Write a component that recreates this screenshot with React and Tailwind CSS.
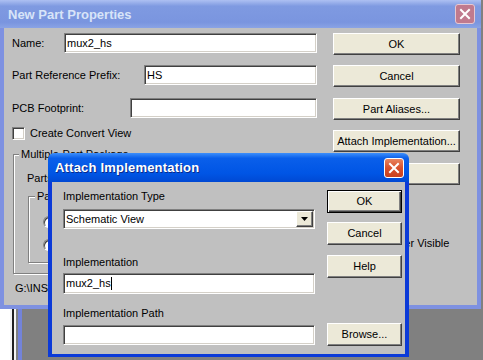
import React from "react";

const font = "font-['Liberation_Sans',Arial,sans-serif]";

const raised =
  "bg-[#ece9d8] border border-t-white border-l-white border-r-[#404040] border-b-[#404040] shadow-[inset_-1px_-1px_0_#808080]";
const sunken =
  "bg-white border border-t-[#808080] border-l-[#808080] border-r-white border-b-white shadow-[inset_1px_1px_0_#404040,inset_-1px_-1px_0_#d4d0c8]";
const etched = "border border-[#808080] shadow-[1px_1px_0_#fff,inset_1px_1px_0_#fff]";

const Button = ({ children, className = "", isDefault = false }) => (
  <div
    className={
      isDefault
        ? `flex items-center justify-center bg-[#ece9d8] border border-black shadow-[inset_1px_1px_0_#fff,inset_-1px_-1px_0_#404040,inset_-2px_-2px_0_#808080] ${className}`
        : `flex items-center justify-center ${raised} ${className}`
    }
  >
    <span className="text-[11px] leading-[13px] text-black">{children}</span>
  </div>
);

const Field = ({ value, caret = false, className = "" }) => (
  <div className={`flex items-center pl-[2px] ${sunken} ${className}`}>
    <span className="text-[11px] leading-[13px] text-black">{value}</span>
    {caret && <span className="w-px h-[13px] bg-black" />}
  </div>
);

const CloseX = ({ active }) => (
  <div
    className={
      active
        ? "w-[20px] h-[20px] rounded-[3px] border border-white bg-[linear-gradient(to_bottom,#e8845f_0%,#d9502c_50%,#c8401e_100%)] flex items-center justify-center"
        : "w-[20px] h-[20px] rounded-[3px] border border-[#e6c8d2] bg-[#c07a8e] flex items-center justify-center"
    }
  >
    <svg width="12" height="12" viewBox="0 0 12 12">
      <path d="M2 2 L10 10 M10 2 L2 10" stroke="#fff" strokeWidth="2" strokeLinecap="square" />
    </svg>
  </div>
);

const Checkbox = () => <div className={`w-[13px] h-[13px] shrink-0 ${sunken}`} />;

const Radio = () => (
  <div className="w-[12px] h-[12px] rounded-full bg-white border border-t-[#808080] border-l-[#808080] border-r-white border-b-white shadow-[inset_1px_1px_0_#404040]" />
);

function NewPartProperties() {
  return (
    <div className="absolute left-0 top-0 w-[481px] h-[309px] flex flex-col">
      <div className="h-[28px] shrink-0 flex items-center justify-between pl-[8px] pr-[6px] bg-[linear-gradient(to_bottom,#adc0f2_0%,#7f9ae1_22%,#7a95df_80%,#8aa3e5_100%)]">
        <span className="text-[13px] font-bold text-[#d8e4f8] leading-none">New Part Properties</span>
        <CloseX active={false} />
      </div>
      <div className="flex-1 bg-[#c0c0c0] border-x-4 border-b-4 border-[#7e91e1] flex text-black text-[11px] leading-[13px]">
        <div className="w-[321px] pl-[8px] flex flex-col">
          <div className="flex items-center mt-[5px] h-[20px]">
            <span className="w-[52px]">Name:</span>
            <Field value="mux2_hs" className="w-[253px] h-[20px]" />
          </div>
          <div className="flex items-center mt-[12px] h-[20px]">
            <span className="w-[132px]">Part Reference Prefix:</span>
            <Field value="HS" className="w-[173px] h-[20px]" />
          </div>
          <div className="flex items-center mt-[13px] h-[20px]">
            <span className="w-[118px]">PCB Footprint:</span>
            <Field value="" className="w-[187px] h-[20px]" />
          </div>
          <div className="flex items-center mt-[9px] h-[13px] gap-[5px]">
            <Checkbox />
            <span>Create Convert View</span>
          </div>
          <fieldset className={`ml-[1px] mt-[8px] w-[309px] h-[126px] ${etched}`}>
            <legend className="ml-[5px] px-[2px] bg-[#c0c0c0]">Multiple-Part Package</legend>
            <div className="pl-[13px] flex flex-col">
              <div className="mt-[11px]">Parts per Pkg:</div>
              <fieldset className={`ml-[1px] mt-[5px] w-[150px] h-[73px] ${etched}`}>
                <legend className="ml-[6px] px-[2px] bg-[#c0c0c0]">Package Type</legend>
                <div className="pl-[14px] flex flex-col">
                  <div className="mt-[13px]">
                    <Radio />
                  </div>
                  <div className="mt-[11px]">
                    <Radio />
                  </div>
                </div>
              </fieldset>
            </div>
          </fieldset>
          <div className="mt-[8px] ml-[3px]">G:\INSTALL</div>
        </div>
        <div className="ml-[8px] flex flex-col">
          <Button className="mt-[5px] w-[127px] h-[22px]">OK</Button>
          <Button className="mt-[10px] w-[127px] h-[22px]">Cancel</Button>
          <Button className="mt-[11px] w-[127px] h-[22px]">Part Aliases...</Button>
          <Button className="mt-[10px] w-[127px] h-[22px]">Attach Implementation...</Button>
          <Button className="mt-[11px] w-[127px] h-[22px]">Help</Button>
          <div className="mt-[52px] ml-[6px] flex items-center gap-[4px]">
            <Checkbox />
            <span>Pin Number Visible</span>
          </div>
        </div>
      </div>
    </div>
  );
}

function AttachImplementation() {
  return (
    <div className="absolute left-[48px] top-[153px] w-[361px] h-[204px] flex flex-col">
      <div className="h-[29px] shrink-0 flex items-center justify-between pl-[7px] pr-[5px] rounded-t-[6px] bg-[linear-gradient(to_bottom,#3d8ffb_0%,#0a5fea_18%,#0055e5_70%,#0048d3_100%)]">
        <span className="text-[13px] font-bold text-white leading-none tracking-[0.2px] [text-shadow:1px_1px_0_#0a2a8a]">
          Attach Implementation
        </span>
        <CloseX active />
      </div>
      <div className="flex-1 bg-[#c0c0c0] border-x-4 border-b-[3px] border-[#0b3ad8] flex pl-[11px] text-black text-[11px] leading-[13px]">
        <div className="w-[252px] flex flex-col">
          <div className="mt-[8px]">Implementation Type</div>
          <div className={`mt-[6px] h-[20px] flex items-center justify-between pl-[2px] pr-[1px] ${sunken}`}>
            <span>Schematic View</span>
            <div className={`w-[17px] h-[16px] flex items-center justify-center ${raised}`}>
              <svg width="7" height="4" viewBox="0 0 7 4">
                <path d="M0 0 H7 L3.5 4 Z" fill="#000" />
              </svg>
            </div>
          </div>
          <div className="mt-[27px]">Implementation</div>
          <Field value="mux2_hs" caret className="mt-[4px] h-[21px]" />
          <div className="mt-[13px]">Implementation Path</div>
          <Field value="" className="mt-[5px] h-[20px]" />
        </div>
        <div className="ml-[12px] flex flex-col">
          <Button isDefault className="mt-[8px] w-[75px] h-[23px]">OK</Button>
          <Button className="mt-[9px] w-[75px] h-[23px]">Cancel</Button>
          <Button className="mt-[10px] w-[75px] h-[23px]">Help</Button>
          <Button className="mt-[45px] w-[75px] h-[23px]">Browse...</Button>
        </div>
      </div>
    </div>
  );
}

export default function App() {
  return (
    <div className={`relative w-[483px] h-[360px] overflow-hidden bg-[#808080] ${font}`}>
      <div className="absolute left-0 top-[309px] h-[51px] flex">
        <div className="w-[10px] bg-white" />
        <div className="w-[2px] bg-[#f4f4f4]" />
        <div className="w-[2px] bg-[#202020]" />
        <div className="w-[2px] bg-[#f4f4f4]" />
        <div className="w-[2px] bg-[#808080]" />
        <div className="w-[4px] bg-[#7383d9]" />
      </div>
      <NewPartProperties />
      <AttachImplementation />
    </div>
  );
}
